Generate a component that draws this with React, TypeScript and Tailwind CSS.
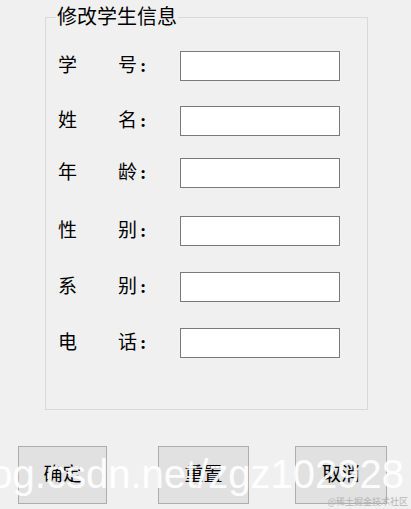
import React from "react";

const rows: { a: string; b: string; mt: string }[] = [
  { a: "学", b: "号", mt: "mt-[24px]" },
  { a: "姓", b: "名", mt: "mt-[25px]" },
  { a: "年", b: "龄", mt: "mt-[22px]" },
  { a: "性", b: "别", mt: "mt-[28px]" },
  { a: "系", b: "别", mt: "mt-[26px]" },
  { a: "电", b: "话", mt: "mt-[26px]" },
];

export default function App() {
  return (
    <div
      className="relative w-[411px] h-[509px] overflow-hidden bg-[#f0f0f0] text-black"
      style={{ fontFamily: '"Liberation Serif", "Noto Sans CJK SC", serif' }}
    >
      <fieldset className="ml-[45px] mt-[7px] w-[323px] h-[403px] border border-[#d9d9d9]">
        <legend className="ml-[10px] px-[1px] text-[20px] leading-[20px]">修改学生信息</legend>
        {rows.map((r, i) => (
          <div key={i} className={`${r.mt} flex items-center h-[30px]`}>
            <div className="ml-[12px] w-[122px] flex items-center text-[19px] leading-[20px]">
              <span className="w-[60px]">{r.a}</span>
              <span>{r.b}</span>
              <span className="ml-[3px] font-bold">:</span>
            </div>
            <div className="w-[160px] h-[30px] bg-white border border-[#7a7a7a]" />
          </div>
        ))}
      </fieldset>
      <div className="mt-[36px] flex">
        <button className="ml-[18px] w-[89px] h-[58px] bg-[#e1e1e1] border border-[#adadad] text-[19px]">确定</button>
        <button className="ml-[51px] w-[91px] h-[58px] bg-[#e1e1e1] border border-[#adadad] text-[19px]">重置</button>
        <button className="ml-[46px] w-[92px] h-[58px] bg-[#e1e1e1] border border-[#adadad] text-[19px]">取消</button>
      </div>
      <div
        className="absolute right-[7px] top-[454px] text-[40px] leading-[40px] text-white/90 whitespace-nowrap"
        style={{ fontFamily: '"Liberation Sans", sans-serif' }}
      >
        blog.csdn.net/zgz102928
      </div>
      <div
        className="absolute right-[3px] bottom-[2px] text-[9px] leading-[10px] text-[#b4b4b4] whitespace-nowrap"
        style={{ fontFamily: '"Noto Sans CJK SC", sans-serif' }}
      >
        @稀土掘金技术社区
      </div>
    </div>
  );
}
